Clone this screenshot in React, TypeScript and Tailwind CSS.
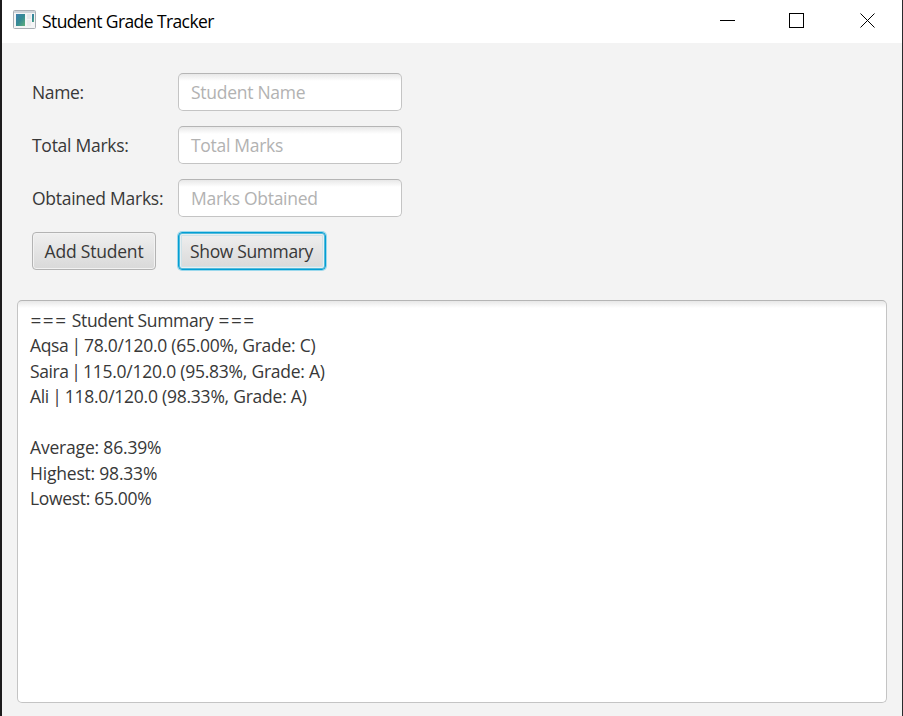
import React from "react";

const fields = [
  { label: "Name:", labelClass: "tracking-[-0.35px]", hint: "Student Name", hintClass: "tracking-[-0.27px]" },
  { label: "Total Marks:", labelClass: "tracking-[-0.27px]", hint: "Total Marks", hintClass: "tracking-[-0.29px]" },
  { label: "Obtained Marks:", labelClass: "tracking-[-0.27px]", hint: "Marks Obtained", hintClass: "tracking-[-0.29px]" },
];

const lines = [
  [
    { text: "===", cls: "ml-[0.5px] text-[19px] leading-none tracking-[1.5px]" },
    { text: " Student Summary ", cls: "tracking-[-0.35px]" },
    { text: "===", cls: "ml-[0.8px] text-[19px] leading-none tracking-[1.5px]" },
  ],
  [
    { text: "Aqsa | ", cls: "tracking-[-0.35px] [word-spacing:-1.1px]" },
    { text: "78.0/120.0 (65.00%, Grade: C)", cls: "tracking-[-0.26px]" },
  ],
  [
    { text: "Saira | ", cls: "tracking-[-0.4px] [word-spacing:-1.6px]" },
    { text: "115.0/120.0 (95.83%, Grade: A)", cls: "tracking-[-0.24px]" },
  ],
  [
    { text: "Ali | ", cls: "tracking-[-0.35px] [word-spacing:-0.9px]" },
    { text: "118.0/120.0 (98.33%, Grade: A)", cls: "tracking-[-0.24px]" },
  ],
  [],
  [{ text: "Average: 86.39%", cls: "tracking-[-0.18px]" }],
  [{ text: "Highest: 98.33%", cls: "tracking-[-0.2px]" }],
  [{ text: "Lowest: 65.00%", cls: "tracking-[-0.32px]" }],
];

function AppIcon() {
  return (
    <svg width="23" height="20" viewBox="0 0 23 20" className="block">
      <defs>
        <linearGradient id="pane" x1="0" y1="0" x2="1" y2="1">
          <stop offset="0" stopColor="#3f7fae" />
          <stop offset="0.5" stopColor="#348a94" />
          <stop offset="1" stopColor="#5fb07a" />
        </linearGradient>
      </defs>
      <rect x="0.5" y="0.5" width="22" height="18" rx="1" fill="#f4f5f6" stroke="#a9aeb4" />
      <rect x="1" y="1" width="21" height="2" fill="#cfd4da" />
      <rect x="3" y="4" width="9" height="12" fill="url(#pane)" />
      <rect x="14" y="4" width="4" height="5" fill="#e6e8ea" />
      <rect x="14" y="10" width="4" height="6" fill="#eaecee" />
      <rect x="19" y="4" width="2" height="8" fill="url(#pane)" />
    </svg>
  );
}

export default function App() {
  return (
    <div className="flex h-[716px] w-[903px] flex-col overflow-hidden border-r border-l-2 border-r-[#2a2a2d] border-l-[#1c1b1c] bg-[#f3f3f3] font-['Open_Sans','Noto_Sans',sans-serif] text-[17.5px] text-[#383838]">
      <header className="flex h-[43px] shrink-0 items-start bg-white text-black">
        <div className="pt-[10px] pl-[11px]">
          <AppIcon />
        </div>
        <h1 className="ml-[6px] pt-[9px] leading-6 font-normal tracking-[-0.6px] whitespace-nowrap">Student Grade Tracker</h1>
        <svg width="160" height="20" viewBox="0 0 160 20" className="mt-[11px] mr-6 ml-auto block" fill="none" stroke="#000">
          <path d="M2 9.5h15" shapeRendering="crispEdges" />
          <rect x="71.5" y="2.5" width="14" height="14" shapeRendering="crispEdges" />
          <path d="M142.500 2.500l14 14M156.500 2.500l-14 14" />
        </svg>
      </header>

      <main className="flex min-h-0 flex-1 flex-col px-[15px] pt-[30px] pb-[13px]">
        <div className="grid w-[370px] grid-cols-[131px_224px] gap-x-[15px] gap-y-[15px] pl-[15px]">
          {fields.map((f) => (
            <React.Fragment key={f.label}>
              <label className={`flex h-[38px] items-center whitespace-nowrap ${f.labelClass}`}>{f.label}</label>
              <div className="flex h-[38px] items-center rounded-[5px] border border-[#c4c4c4] border-t-[#b5b5b5] bg-white bg-linear-to-b from-[#e8e8e8] to-white to-[7px] pl-3 text-[#b2b2b2]">
                <span className={`whitespace-nowrap ${f.hintClass}`}>{f.hint}</span>
              </div>
            </React.Fragment>
          ))}
          <button className="flex h-[38px] w-[124px] items-center justify-center rounded-[4px] border border-[#b3b3b3] bg-linear-to-b from-[#efefef] to-[#d9d9d9] whitespace-nowrap shadow-[inset_0_0_0_1px_#f2f2f2]">
            <span className="tracking-[-0.2px]">Add Student</span>
          </button>
          <button className="flex h-[38px] w-[148px] items-center justify-center rounded-[4px] border border-[#039ed3] bg-linear-to-b from-[#efefef] to-[#d9d9d9] pr-px whitespace-nowrap shadow-[0_0_0_1px_#9bd8ec,inset_0_0_0_1px_#52bbdc,inset_0_0_0_2px_#e8eff1,inset_0_0_0_3px_#cfe2e8]">
            <span className="tracking-[-0.38px]">Show Summary</span>
          </button>
        </div>

        <div className="mt-[30px] flex min-h-0 flex-1 flex-col rounded-[5px] border border-[#c4c4c4] border-t-[#b5b5b5] bg-white bg-linear-to-b from-[#e8e8e8] to-white to-[7px] pt-[6.75px] pl-3 leading-[25.5px]">
          {lines.map((parts, i) => (
            <p key={i} className="h-[25.5px] whitespace-pre">
              {parts.map((p, j) => (
                <span key={j} className={p.cls}>{p.text}</span>
              ))}
            </p>
          ))}
        </div>
      </main>
    </div>
  );
}
